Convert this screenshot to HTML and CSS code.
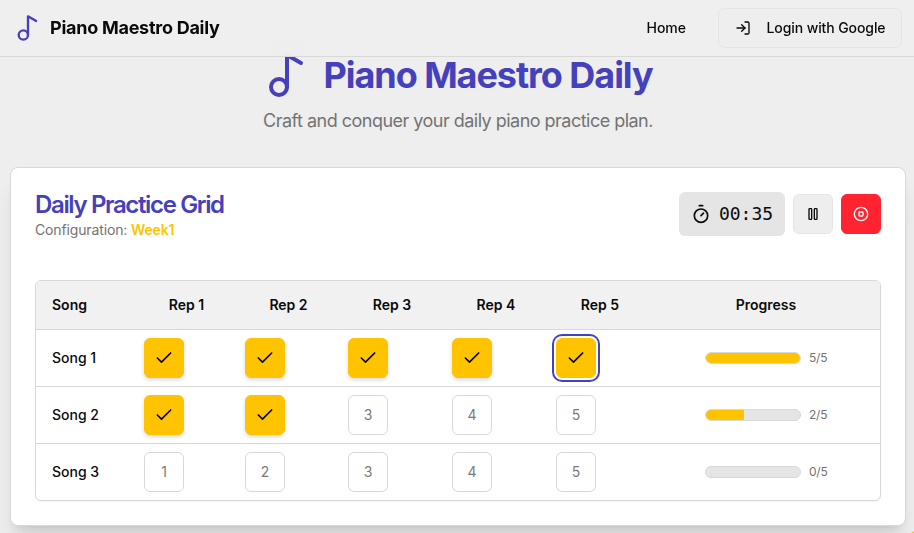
FILE: index.html
```
<!DOCTYPE html>
<html lang="en">
<head>
    <meta charset="UTF-8">
    <meta name="viewport" content="width=device-width, initial-scale=1.0">
    <title>Piano Maestro Daily</title>
    <link rel="stylesheet" href="styles.css">
</head>
<body>
    <!-- Shared icons -->
    <svg class="sprite">
        <symbol id="note" viewBox="0 0 24 24"><circle cx="8" cy="18" r="4"/><path d="M12 18V2l7 4"/></symbol>
        <symbol id="check" viewBox="0 0 24 24"><path d="M20 6 9 17l-5-5"/></symbol>
    </svg>

    <header class="navbar">
        <a class="brand" href="#">
            <svg class="icon brand-icon"><use href="#note"/></svg>
            <span>Piano Maestro Daily</span>
        </a>
        <nav>
            <a class="home-link" href="#">Home</a>
            <button class="login-btn">
                <svg class="icon" viewBox="0 0 24 24"><path d="M15 3h4a2 2 0 0 1 2 2v14a2 2 0 0 1-2 2h-4"/><path d="m10 17 5-5-5-5"/><path d="M15 12H3"/></svg>
                <span>Login with Google</span>
            </button>
        </nav>
    </header>

    <main>
        <div class="hero">
            <div class="hero-title">
                <svg class="icon hero-icon"><use href="#note"/></svg>
                <h1>Piano Maestro Daily</h1>
            </div>
            <p>Craft and conquer your daily piano practice plan.</p>
        </div>

        <section class="card">
            <div class="card-header">
                <div>
                    <h2>Daily Practice Grid</h2>
                    <p class="config">Configuration: <strong>Week1</strong></p>
                </div>
                <div class="controls">
                    <div class="timer">
                        <svg class="icon" viewBox="0 0 24 24"><path d="M10 2h4"/><path d="m12 14 3-3"/><circle cx="12" cy="14" r="8"/></svg>
                        <span>00:35</span>
                    </div>
                    <button class="pause-btn" aria-label="Pause">
                        <svg class="icon" viewBox="0 0 24 24"><rect x="14" y="4" width="4" height="16" rx="1"/><rect x="6" y="4" width="4" height="16" rx="1"/></svg>
                    </button>
                    <button class="stop-btn" aria-label="Stop">
                        <svg class="icon" viewBox="0 0 24 24"><circle cx="12" cy="12" r="10"/><rect x="9" y="9" width="6" height="6" rx="1"/></svg>
                    </button>
                </div>
            </div>

            <div class="grid">
                <div class="row head">
                    <span class="song">Song</span>
                    <span>Rep 1</span>
                    <span>Rep 2</span>
                    <span>Rep 3</span>
                    <span>Rep 4</span>
                    <span>Rep 5</span>
                    <span>Progress</span>
                </div>
                <div class="row">
                    <span class="song">Song 1</span>
                    <button class="rep done"><svg class="icon"><use href="#check"/></svg></button>
                    <button class="rep done"><svg class="icon"><use href="#check"/></svg></button>
                    <button class="rep done"><svg class="icon"><use href="#check"/></svg></button>
                    <button class="rep done"><svg class="icon"><use href="#check"/></svg></button>
                    <button class="rep done active"><svg class="icon"><use href="#check"/></svg></button>
                    <div class="progress"><div class="bar"><div class="fill" style="width: 100%"></div></div><span>5/5</span></div>
                </div>
                <div class="row">
                    <span class="song">Song 2</span>
                    <button class="rep done"><svg class="icon"><use href="#check"/></svg></button>
                    <button class="rep done"><svg class="icon"><use href="#check"/></svg></button>
                    <button class="rep">3</button>
                    <button class="rep">4</button>
                    <button class="rep">5</button>
                    <div class="progress"><div class="bar"><div class="fill" style="width: 40%"></div></div><span>2/5</span></div>
                </div>
                <div class="row">
                    <span class="song">Song 3</span>
                    <button class="rep">1</button>
                    <button class="rep">2</button>
                    <button class="rep">3</button>
                    <button class="rep">4</button>
                    <button class="rep">5</button>
                    <div class="progress"><div class="bar"><div class="fill" style="width: 0%"></div></div><span>0/5</span></div>
                </div>
            </div>
        </section>
    </main>

    <div class="float-btn"></div>
</body>
</html>
```
FILE: styles.css
```
* {
    box-sizing: border-box;
}

body {
    margin: 0;
    height: 533px;
    overflow: hidden;
    background-color: #eeeeee;
    color: #0a0a0a;
    font-family: Inter, sans-serif;
    font-size: 14px;
    line-height: 20px;
}

h1, h2, p {
    margin: 0;
}

a {
    color: inherit;
    text-decoration: none;
}

button {
    padding: 0;
    font: inherit;
    color: inherit;
    cursor: pointer;
}

.sprite {
    display: none;
}

.icon {
    width: 16px;
    height: 16px;
    flex-shrink: 0;
    fill: none;
    stroke: currentColor;
    stroke-width: 2;
    stroke-linecap: round;
    stroke-linejoin: round;
}

/* Navbar */
.navbar {
    position: fixed;
    top: 0;
    left: 0;
    z-index: 10;
    width: 100%;
    height: 57px;
    padding: 0 12px 0 14px;
    display: flex;
    align-items: center;
    justify-content: space-between;
    background-color: rgba(238, 238, 238, 0.95);
    backdrop-filter: blur(8px);
    border-bottom: 1px solid #d8d8d8;
}

.brand {
    display: flex;
    align-items: center;
    gap: 8px;
    font-size: 18px;
    font-weight: 700;
    letter-spacing: -0.26px;
}

.brand-icon {
    width: 28px;
    height: 28px;
    color: #4540bb;
}

.navbar nav {
    display: flex;
    align-items: center;
    gap: 32px;
    font-weight: 500;
}

.login-btn {
    width: 184px;
    height: 40px;
    display: flex;
    align-items: center;
    justify-content: center;
    gap: 16px;
    background-color: #eeeeee;
    border: 1px solid #e5e5e5;
    border-radius: 6px;
    letter-spacing: -0.1px;
}

/* Hero */
main {
    width: 896px;
    margin-left: 10px;
    padding-top: 51px;
}

.hero {
    height: 116px;
    text-align: center;
}

.hero-title {
    display: flex;
    justify-content: center;
    gap: 12px;
    color: #4540bb;
}

.hero-icon {
    width: 48px;
    height: 48px;
}

.hero h1 {
    font-size: 36px;
    line-height: 48px;
    font-weight: 700;
    letter-spacing: -1.05px;
}

.hero p {
    margin-top: 8px;
    font-size: 18px;
    line-height: 28px;
    color: #737373;
    letter-spacing: -0.52px;
}

/* Practice card */
.card {
    height: 359px;
    padding: 24px;
    background-color: #fff;
    border: 1px solid #d8d8d8;
    border-radius: 8px;
    box-shadow: 0 20px 25px -5px rgba(0, 0, 0, 0.1), 0 8px 10px -6px rgba(0, 0, 0, 0.1);
}

.card-header {
    display: flex;
    justify-content: space-between;
    height: 88px;
}

.card h2 {
    font-size: 24px;
    line-height: 26px;
    font-weight: 600;
    letter-spacing: -1.36px;
    color: #4540bb;
}

.config {
    margin-top: 2px;
    color: #737373;
    letter-spacing: -0.14px;
}

.config strong {
    font-weight: 600;
    color: #ffc300;
}

.controls {
    display: flex;
    align-items: center;
    gap: 8px;
    height: 44px;
}

.timer {
    width: 106px;
    height: 44px;
    display: flex;
    align-items: center;
    justify-content: center;
    gap: 8px;
    background-color: #e5e5e5;
    border-radius: 6px;
    font-family: "DejaVu Sans Mono", monospace;
    font-size: 18px;
}

.timer .icon {
    width: 20px;
    height: 20px;
}

.pause-btn,
.stop-btn {
    width: 40px;
    height: 40px;
    display: flex;
    align-items: center;
    justify-content: center;
    background-color: #eeeeee;
    border: 1px solid #e5e5e5;
    border-radius: 6px;
}

.stop-btn {
    background-color: #ff2430;
    border-color: #ff2430;
    color: #fff;
}

/* Grid of songs and repetitions */
.grid {
    border: 1px solid #d8d8d8;
    border-radius: 6px;
    overflow: hidden;
    box-shadow: 0 1px 2px rgba(0, 0, 0, 0.05);
}

.row {
    display: grid;
    grid-template-columns: 100px 101px 103px 104px 104px 104px 228px;
    align-items: center;
    height: 57px;
    border-bottom: 1px solid #d8d8d8;
}

.row:last-child {
    height: 56px;
    border-bottom: none;
}

.head {
    height: 49px;
    background-color: #f1f1f1;
    font-weight: 600;
    text-align: center;
}

.song {
    padding-left: 16px;
    text-align: left;
    font-weight: 500;
}

.head .song {
    font-weight: 600;
}

.rep {
    width: 40px;
    height: 40px;
    margin-left: 8px;
    display: flex;
    align-items: center;
    justify-content: center;
    background-color: #fff;
    border: 1px solid #d8d8d8;
    border-radius: 6px;
    color: #7a7a7a;
}

.rep .icon {
    width: 20px;
    height: 20px;
}

.rep.done {
    background-color: #ffc300;
    border-color: #ffc300;
    color: #0a0a0a;
    box-shadow: 0 2px 4px rgba(0, 0, 0, 0.15);
}

.rep.active {
    box-shadow: 0 0 0 2px #fff, 0 0 0 4px #4540bb;
}

.progress {
    display: flex;
    align-items: center;
    justify-content: center;
    gap: 8px;
    font-size: 12px;
    color: #737373;
}

.progress span {
    width: 18px;
    letter-spacing: -0.2px;
}

.bar {
    width: 96px;
    height: 12px;
    background-color: #e5e5e5;
    border: 1px solid #d8d8d8;
    border-radius: 6px;
    overflow: hidden;
}

.fill {
    height: 100%;
    background-color: #ffc300;
}

/* Only its corner shows at the bottom right */
.float-btn {
    position: fixed;
    right: -9px;
    bottom: -12px;
    width: 14px;
    height: 14px;
    border-radius: 7px;
    background-color: #ffc300;
}
```
